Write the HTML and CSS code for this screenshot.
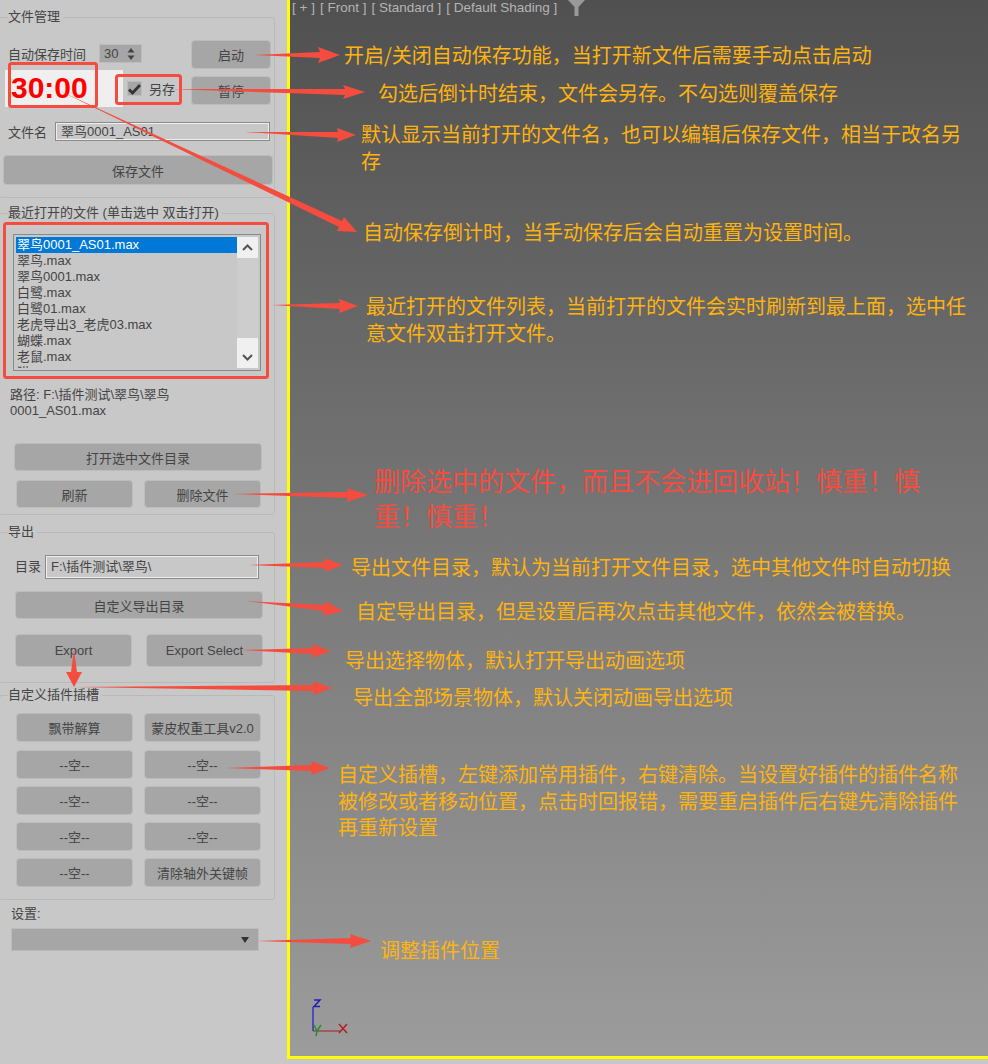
FILE: index.html
```html
<!DOCTYPE html>
<html lang="zh-CN">
<head>
  <meta charset="UTF-8" />
  <title>文件管理插件说明</title>
  <link rel="stylesheet" href="styles.css">
</head>
<body>
<div class="page">
  <div class="sidebar">
    <div class="group group-file">
      <div class="group-title">文件管理</div>
      <div class="auto-row">
        <div class="auto-left">
          <div class="spin-row">
            <span class="spin-label">自动保存时间</span>
            <div class="spinner"><span>30</span>
              <svg width="8" height="14" viewBox="0 0 8 14"><path d="M4 1 7.500 5.500H.5zM4 13 .5 8.500H7.500z" fill="#444"/></svg>
            </div>
          </div>
          <div class="timer-row">
            <div class="timer">30:00</div>
            <div class="check"><svg width="13" height="12" viewBox="0 0 13 12"><path d="M1 6.500 4.500 10 12 2" fill="none" stroke="#333" stroke-width="2.800"/></svg></div>
            <span>另存</span>
          </div>
        </div>
        <div class="auto-buttons">
          <div class="btn">启动</div>
          <div class="btn">暂停</div>
        </div>
      </div>
      <div class="name-row">
        <span class="name-label">文件名</span>
        <div class="input name-input">翠鸟0001_AS01</div>
      </div>
      <div class="btn btn-save">保存文件</div>
    </div>

    <div class="group group-recent">
      <div class="group-title">最近打开的文件 (单击选中 双击打开)</div>
      <div class="listbox">
        <div class="list-items">
          <div class="list-item selected">翠鸟0001_AS01.max</div>
          <div class="list-item">翠鸟.max</div>
          <div class="list-item">翠鸟0001.max</div>
          <div class="list-item">白鹭.max</div>
          <div class="list-item">白鹭01.max</div>
          <div class="list-item">老虎导出3_老虎03.max</div>
          <div class="list-item">蝴蝶.max</div>
          <div class="list-item">老鼠.max</div>
          <div class="list-item">猫.max</div>
        </div>
        <div class="scrollbar">
          <svg width="21" height="21" viewBox="0 0 21 21"><path d="M6 13 10.500 8.500 15 13" fill="none" stroke="#555" stroke-width="2"/></svg>
          <div class="scroll-thumb"></div>
          <div class="scroll-track"></div>
          <svg width="21" height="21" viewBox="0 0 21 21"><path d="M6 8 10.500 12.500 15 8" fill="none" stroke="#555" stroke-width="2"/></svg>
        </div>
      </div>
      <div class="path-text">路径: F:\插件测试\翠鸟\翠鸟<br>0001_AS01.max</div>
      <div class="btn btn-open">打开选中文件目录</div>
      <div class="pair pair-recent">
        <div class="btn">刷新</div>
        <div class="btn">删除文件</div>
      </div>
    </div>

    <div class="group group-export">
      <div class="group-title">导出</div>
      <div class="dir-row">
        <span class="dir-label">目录</span>
        <div class="input dir-input">F:\插件测试\翠鸟\</div>
      </div>
      <div class="btn btn-dir">自定义导出目录</div>
      <div class="pair pair-export">
        <div class="btn">Export</div>
        <div class="btn">Export Select</div>
      </div>
    </div>

    <div class="group group-slots">
      <div class="group-title">自定义插件插槽</div>
      <div class="slot-grid">
        <div class="btn">飘带解算</div>
        <div class="btn">蒙皮权重工具v2.0</div>
        <div class="btn">--空--</div>
        <div class="btn">--空--</div>
        <div class="btn">--空--</div>
        <div class="btn">--空--</div>
        <div class="btn">--空--</div>
        <div class="btn">--空--</div>
        <div class="btn">--空--</div>
        <div class="btn">清除轴外关键帧</div>
      </div>
    </div>

    <div class="settings-label">设置:</div>
    <div class="dropdown">
      <svg width="8" height="6" viewBox="0 0 8 6"><path d="M0 0H8L4 6z" fill="#333"/></svg>
    </div>
  </div>

  <div class="viewport">
    <div class="viewport-label">
      <span>[ + ]</span><span>[ Front ]</span><span>[ Standard ]</span><span>[ Default Shading ]</span>
      <svg class="filter-icon" width="17" height="16" viewBox="0 0 17 16"><path d="M0 0H17L10.500 7V16H6.500V7z" fill="#999"/></svg>
    </div>
    <svg class="axis" width="42" height="40" viewBox="0 0 42 40">
      <path d="M6 8V32" stroke="#0000d0" stroke-width="1" fill="none"/>
      <path d="M6 32H33" stroke="#a02020" stroke-width="1" fill="none"/>
      <path d="M7 1H13L7 7.500H13" stroke="#2020b0" stroke-width="1.500" fill="none"/>
      <path d="M32 25 40 34M40 25 32 34" stroke="#b02020" stroke-width="1.500" fill="none"/>
      <path d="M7 26 10 32 14 26M10 32 9 37" stroke="#209030" stroke-width="1.500" fill="none"/>
    </svg>
  </div>

  <div class="note" style="left:344px;top:41px">开启/关闭自动保存功能，当打开新文件后需要手动点击启动</div>
  <div class="note" style="left:378px;top:79px">勾选后倒计时结束，文件会另存。不勾选则覆盖保存</div>
  <div class="note note-wrap" style="left:361px;top:120px;width:610px">默认显示当前打开的文件名，也可以编辑后保存文件，相当于改名另存</div>
  <div class="note" style="left:363px;top:218px">自动保存倒计时，当手动保存后会自动重置为设置时间。</div>
  <div class="note note-wrap" style="left:366px;top:292px;width:610px">最近打开的文件列表，当前打开的文件会实时刷新到最上面，选中任意文件双击打开文件。</div>
  <div class="note note-danger" style="left:374px;top:462px;width:555px">删除选中的文件，而且不会进回收站！慎重！慎重！慎重！</div>
  <div class="note" style="left:351px;top:553px">导出文件目录，默认为当前打开文件目录，选中其他文件时自动切换</div>
  <div class="note" style="left:356px;top:597px">自定导出目录，但是设置后再次点击其他文件，依然会被替换。</div>
  <div class="note" style="left:345px;top:646px">导出选择物体，默认打开导出动画选项</div>
  <div class="note" style="left:353px;top:683px">导出全部场景物体，默认关闭动画导出选项</div>
  <div class="note note-wrap note-slots" style="left:338px;top:761px;width:630px">自定义插槽，左键添加常用插件，右键清除。当设置好插件的插件名称被修改或者移动位置，点击时回报错，需要重启插件后右键先清除插件再重新设置</div>
  <div class="note" style="left:380px;top:936px">调整插件位置</div>

  <svg class="marks" width="988" height="1064" viewBox="0 0 988 1064">
    <g fill="none" stroke="#f44d3f" stroke-width="3">
      <rect x="9.500" y="63.500" width="87" height="43" rx="2"/>
      <rect x="116.500" y="75.500" width="64" height="28" rx="2"/>
      <rect x="4.500" y="223.500" width="263" height="154" rx="2"/>
    </g>
    <g fill="#f44d3f">
      <path d="M254 55 320 52 318 47 340 55 318 63 320 58z"/>
      <path d="M170 89 345 89 343 85 365 92 343 99 345 95z"/>
      <path d="M245 132 338 132 337 128 356 135 337 142 338 138z"/>
      <path d="M58 90 342 221 344 217 357 232 337 231 339 227z"/>
      <path d="M272 305 340 303 339 299 358 306 339 313 340 309z"/>
      <path d="M232 494 348 492 347 488 368 495 347 502 348 498z"/>
      <path d="M248 565 325 562 324 558 343 565 324 572 325 568z"/>
      <path d="M246 601 325 605 325 601 343 611 323 616 324 611z"/>
      <path d="M242 650 313 648 312 644 331 651 312 658 313 654z"/>
      <path d="M74 687 314 685 313 681 332 688 313 695 314 691z"/>
      <path d="M74 650 77 672 82 672 74 687 66 672 71 672z"/>
      <path d="M225 768 312 765 311 761 330 768 311 775 312 771z"/>
      <path d="M256 941 351 938 350 934 371 941 350 948 351 944z"/>
    </g>
  </svg>
</div>
</body>
</html>
```

FILE: styles.css
```css
* { box-sizing: border-box; }
html, body { margin: 0; padding: 0; }
body { background: #c8c8c8; font-family: "Liberation Sans", "Noto Sans CJK SC", sans-serif; font-size: 13px; color: #444; }
.page { position: relative; display: flex; width: 988px; height: 1064px; overflow: hidden; }

.sidebar { width: 287px; flex: none; padding-top: 17px; }
.group { width: 276px; margin-left: -1px; padding-left: 1px; border: 1px solid #b9b9b9; border-radius: 3px; }
.group-title { width: fit-content; height: 16px; line-height: 16px; margin: -9px 0 0 7px; padding: 0 3px 0 0; background: #c8c8c8; white-space: nowrap; }

.btn { display: flex; align-items: center; justify-content: center; background: #a6a6a6; border: 1px solid #bcbcbc; border-radius: 4px; height: 29px; white-space: nowrap; }

.input { height: 19px; line-height: 17px; border: 1px solid #fff; outline: 1px solid #8a8a8a; outline-offset: -1px; background: #c8c8c8; box-shadow: inset 0 0 0 1px #eee; white-space: nowrap; }

.group-file { height: 181px; }
.auto-row { display: flex; margin-top: 15px; }
.auto-left { width: 190px; padding-left: 4px; }
.spin-row { display: flex; align-items: center; margin-top: 4px; height: 19px; }
.spin-label { width: 94px; padding-left: 3px; white-space: nowrap; }
.spinner { display: flex; align-items: center; justify-content: space-between; width: 43px; height: 19px; padding: 0 6px 0 4px; background: #a6a6a6; border: 1px solid #bcbcbc; }
.timer-row { display: flex; align-items: center; margin-top: 7px; height: 37px; }
.timer { width: 118px; height: 37px; margin-right: 4px; padding-left: 6px; background: #efefef; color: #f00; font: bold 30px/36px "Liberation Sans", sans-serif; }
.check { display: flex; align-items: center; justify-content: center; width: 15px; height: 15px; margin-right: 7px; background: #a6a6a6; border: 1px solid #bcbcbc; }
.auto-buttons { display: flex; flex-direction: column; gap: 7px; width: 80px; }
.name-row { display: flex; align-items: center; margin-top: 15px; padding-left: 7px; }
.name-label { width: 47px; }
.name-input { width: 215px; padding-left: 5px; }
.btn-save { width: 270px; height: 30px; margin: 14px 0 0 2px; }

.group-recent { height: 302px; margin-top: 15px; }
.listbox { display: flex; width: 248px; height: 137px; margin: 13px 0 0 12px; border: 1px solid #fff; outline: 1px solid #8a8a8a; outline-offset: -1px; padding: 2px; overflow: hidden; }
.list-items { flex: 1; overflow: hidden; }
.list-item { height: 16px; line-height: 16px; padding-left: 1px; white-space: nowrap; }
.list-item.selected { background: #0078d7; color: #fff; }
.scrollbar { display: flex; flex-direction: column; width: 21px; background: #f0f0f0; flex: none; }
.scrollbar svg { flex: none; }
.scroll-thumb { height: 80px; flex: none; background: #cdcdcd; }
.scroll-track { flex: 1; }
.path-text { margin: 16px 0 0 9px; line-height: 16px; }
.btn-open { width: 248px; height: 28px; margin: 24px 0 0 13px; }
.pair { display: flex; }
.pair-recent { gap: 11px; margin: 9px 0 0 15px; }
.pair-recent .btn { width: 117px; height: 28px; }

.group-export { height: 151px; margin-top: 17px; }
.dir-row { display: flex; align-items: center; margin-top: 15px; padding-left: 14px; }
.dir-label { width: 30px; margin-top: -4px; }
.dir-input { width: 214px; height: 24px; line-height: 22px; padding-left: 5px; }
.btn-dir { width: 248px; height: 28px; margin: 12px 0 0 14px; }
.pair-export { gap: 14px; margin: 15px 0 0 14px; }
.pair-export .btn { width: 117px; height: 33px; }

.group-slots { height: 205px; margin-top: 12px; }
.slot-grid { display: grid; grid-template-columns: 117px 117px; grid-template-rows: 30px repeat(4, 29px); column-gap: 11px; row-gap: 7px; margin: 10px 0 0 15px; }

.settings-label { margin: 6px 0 0 11px; height: 16px; line-height: 16px; }
.dropdown { display: flex; align-items: center; justify-content: flex-end; width: 248px; height: 23px; margin: 6px 0 0 11px; padding-right: 9px; background: #a6a6a6; border: 1px solid #bcbcbc; }

.viewport { position: relative; flex: 1; height: 1059px; border-left: 3px solid #ff0; border-bottom: 3px solid #ff0; background: linear-gradient(#505050, #9c9c9c); }
.viewport-label { display: flex; gap: 5px; margin-left: 2px; height: 16px; line-height: 15px; font-family: "Liberation Sans", sans-serif; font-size: 13.500px; color: #b4b4b4; white-space: nowrap; }
.filter-icon { margin: 0 0 0 6px; }
.axis { position: absolute; left: 17px; bottom: 17px; }

.note { position: absolute; font-family: "Noto Sans CJK SC", sans-serif; font-size: 20px; line-height: 27px; color: #ffb30f; white-space: nowrap; }
.note-wrap { white-space: normal; }
.note-slots { line-height: 26.500px; }
.note-danger { font-size: 26px; line-height: 35px; color: #f44d3f; white-space: normal; }
.marks { position: absolute; left: 0; top: 0; pointer-events: none; }
```
